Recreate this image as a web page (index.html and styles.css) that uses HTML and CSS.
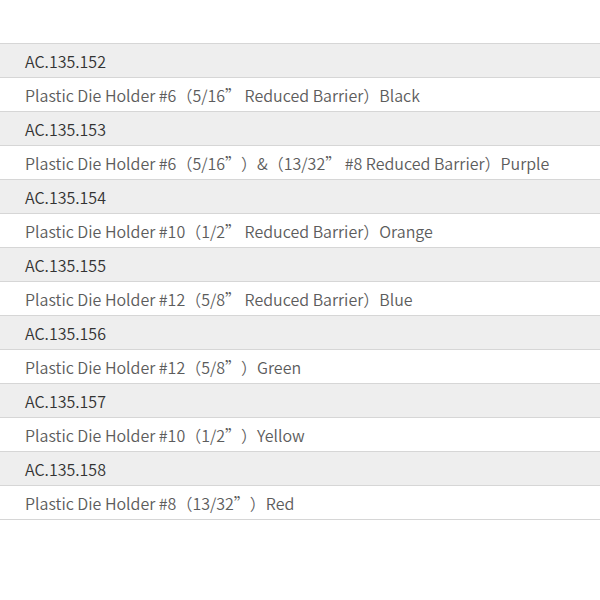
FILE: index.html
```html
<!DOCTYPE html>
<html lang="en">
<head>
<meta charset="utf-8">
<link rel="stylesheet" href="styles.css">
</head>
<body>
<div class="list">
  <div class="row code">AC.135.152</div>
  <div class="row desc">Plastic Die Holder #6（5/16” Reduced Barrier）Black</div>
  <div class="row code">AC.135.153</div>
  <div class="row desc">Plastic Die Holder #6（5/16”）&amp;（13/32” #8 Reduced Barrier）Purple</div>
  <div class="row code">AC.135.154</div>
  <div class="row desc">Plastic Die Holder #10（1/2” Reduced Barrier）Orange</div>
  <div class="row code">AC.135.155</div>
  <div class="row desc">Plastic Die Holder #12（5/8” Reduced Barrier）Blue</div>
  <div class="row code">AC.135.156</div>
  <div class="row desc">Plastic Die Holder #12（5/8”）Green</div>
  <div class="row code">AC.135.157</div>
  <div class="row desc">Plastic Die Holder #10（1/2”）Yellow</div>
  <div class="row code">AC.135.158</div>
  <div class="row desc">Plastic Die Holder #8（13/32”）Red</div>
</div>
</body>
</html>
```
FILE: styles.css
```css
html, body {
  margin: 0;
  padding: 0;
  background: #ffffff;
}
body {
  font-family: "Noto Sans CJK SC", "Noto Sans", sans-serif;
  font-size: 16px;
  text-spacing-trim: space-all;
  font-kerning: normal;
}
.list {
  padding-top: 43px;
  display: flex;
  flex-direction: column;
}
.row {
  height: 33px;
  border-top: 1px solid #d6d6d6;
  display: flex;
  align-items: center;
  padding-left: 25px;
  white-space: nowrap;
  font-weight: 350;
}
.row:last-child {
  border-bottom: 1px solid #d6d6d6;
}
.code {
  background: #eeeeee;
  color: #333333;
}
.desc {
  background: #ffffff;
  color: #5c5c5c;
}
```
